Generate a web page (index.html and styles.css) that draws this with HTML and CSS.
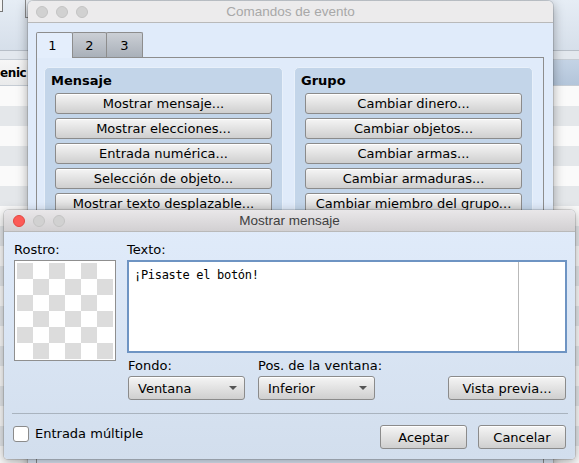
FILE: index.html
```html
<!DOCTYPE html>
<html lang="es">
<head>
<meta charset="utf-8">
<title>Mostrar mensaje</title>
<link rel="stylesheet" href="styles.css">
</head>
<body>
<div class="desk">
  <div class="app">
    <div class="app-toolbar">
      <span class="tb-box"></span>
      <span class="tb-btn"></span>
    </div>
    <div class="app-gap"></div>
    <div class="app-head">
      <div class="hcell"><span>enic</span></div>
      <div class="hcell-sel"></div>
    </div>
    <div class="app-rows"></div>
  </div>

  <div class="win win-cmd">
    <div class="titlebar inactive">
      <div class="lights"><span class="light"></span><span class="light"></span><span class="light"></span></div>
      <div class="wtitle">Comandos de evento</div>
      <div></div>
    </div>
    <div class="cmd-body">
      <div class="tabs">
        <div class="tab sel">1</div>
        <div class="tab">2</div>
        <div class="tab">3</div>
      </div>
      <div class="pane">
        <div class="group">
          <div class="group-title">Mensaje</div>
          <div class="btn gbtn">Mostrar mensaje...</div>
          <div class="btn gbtn">Mostrar elecciones...</div>
          <div class="btn gbtn">Entrada numérica...</div>
          <div class="btn gbtn">Selección de objeto...</div>
          <div class="btn gbtn">Mostrar texto desplazable...</div>
          <div class="btn gbtn">Condición...</div>
        </div>
        <div class="group">
          <div class="group-title">Grupo</div>
          <div class="btn gbtn">Cambiar dinero...</div>
          <div class="btn gbtn">Cambiar objetos...</div>
          <div class="btn gbtn">Cambiar armas...</div>
          <div class="btn gbtn">Cambiar armaduras...</div>
          <div class="btn gbtn">Cambiar miembro del grupo...</div>
          <div class="btn gbtn">Cambiar PV...</div>
        </div>
      </div>
    </div>
  </div>

  <div class="win win-msg">
    <div class="titlebar active">
      <div class="lights"><span class="light red"></span><span class="light"></span><span class="light"></span></div>
      <div class="wtitle">Mostrar mensaje</div>
      <div></div>
    </div>
    <div class="msg-body">
      <div class="main-row">
        <div class="face-col">
          <div class="lbl">Rostro:</div>
          <div class="face"><div class="checker"></div></div>
        </div>
        <div class="text-col">
          <div class="lbl">Texto:</div>
          <div class="textarea">
            <div class="text-content">¡Pisaste el botón!</div>
            <div class="text-margin"></div>
          </div>
          <div class="opts">
            <div class="opt">
              <div class="lbl">Fondo:</div>
              <div class="select"><span>Ventana</span><span class="arrow"></span></div>
            </div>
            <div class="opt">
              <div class="lbl">Pos. de la ventana:</div>
              <div class="select"><span>Inferior</span><span class="arrow"></span></div>
            </div>
            <div class="btn preview">Vista previa...</div>
          </div>
        </div>
      </div>
      <div class="sep"></div>
      <div class="bottom-row">
        <div class="check"></div>
        <div class="check-lbl">Entrada múltiple</div>
        <div class="actions">
          <div class="btn abtn ok">Aceptar</div>
          <div class="btn abtn cancel">Cancelar</div>
        </div>
      </div>
    </div>
  </div>
</div>
</body>
</html>
```

FILE: styles.css
```css
* { box-sizing: border-box; }
html, body { margin: 0; padding: 0; }
body {
  width: 579px;
  height: 463px;
  overflow: hidden;
  font-family: "DejaVu Sans", sans-serif;
  font-size: 13px;
  color: #000;
}
.desk {
  position: relative;
  width: 579px;
  height: 463px;
  overflow: hidden;
  background: #d7dde4;
}

/* background application */
.app {
  display: flex;
  flex-direction: column;
  height: 100%;
}
.app-toolbar {
  height: 51px;
  flex: none;
  display: flex;
  align-items: flex-start;
  background: linear-gradient(#e6edf5, #d6dfea);
  border-bottom: 1px solid #b7bec7;
}
.tb-box {
  width: 3px;
  height: 12px;
  border-right: 1px solid #777;
  border-bottom: 1px solid #777;
  background: #f4f4f4;
}
.tb-btn {
  margin-left: 22px;
  width: 40px;
  height: 18px;
  border-left: 1px solid #888;
  border-bottom: 1px solid #888;
  background: linear-gradient(#eef2f6, #d8dee6);
}
.app-gap {
  height: 9px;
  flex: none;
  background: #e3e8ee;
  border-bottom: 1px solid #c5ccd4;
}
.app-head {
  height: 26px;
  flex: none;
  display: flex;
  border-bottom: 1px solid #c5ccd4;
}
.hcell {
  width: 28px;
  flex: none;
  display: flex;
  align-items: center;
  background: linear-gradient(#f7f7f7, #e9eaeb);
  font-weight: bold;
  font-size: 12px;
  letter-spacing: -0.4px;
  white-space: nowrap;
}
.hcell-sel {
  flex: 1;
  background: linear-gradient(#c4d3e5, #b3c5da);
}
.app-rows {
  flex: 1;
  background: repeating-linear-gradient(to bottom, #fafafa 0 20px, #e4e7ea 20px 40px);
}

/* windows */
.win {
  position: absolute;
  border-radius: 5px 5px 4px 4px;
  overflow: hidden;
  box-shadow: 0 3px 12px rgba(0, 0, 0, 0.35), 0 0 0 1px rgba(0, 0, 0, 0.12);
  display: flex;
  flex-direction: column;
}
.win-cmd {
  left: 28px;
  top: 1px;
  width: 525px;
  height: 480px;
  background: #e0ebfa;
}
.win-msg {
  left: 4px;
  top: 210px;
  width: 571px;
  height: 249px;
  background: linear-gradient(#e1ecfb, #d2deed);
}
.titlebar {
  height: 22px;
  flex: none;
  display: grid;
  grid-template-columns: 1fr auto 1fr;
  align-items: center;
  border-bottom: 1px solid #b9b9b9;
  font-family: "Liberation Sans", Arial, sans-serif;
  font-size: 13.5px;
}
.titlebar.inactive {
  background: #ecebec;
  color: #a8a8a8;
}
.titlebar.active {
  background: linear-gradient(#e9e7e9, #d2d0d2);
  color: #404040;
}
.lights {
  display: flex;
  gap: 8px;
  padding-left: 8px;
}
.win-msg .lights { padding-left: 9px; }
.light {
  width: 12px;
  height: 12px;
  border-radius: 50%;
  background: #d1d1d1;
  border: 1px solid #c3c3c3;
}
.light.red {
  background: #fc5b57;
  border-color: #e2463f;
}
.wtitle { white-space: nowrap; }

/* comandos body */
.cmd-body {
  flex: 1;
  padding: 9px 9px 0 8px;
  display: flex;
  flex-direction: column;
}
.tabs {
  display: flex;
  height: 25px;
  flex: none;
}
.tab {
  width: 35px;
  height: 25px;
  border: 1px solid #8d8d8d;
  border-bottom: none;
  margin-right: -1px;
  display: flex;
  align-items: center;
  justify-content: center;
  background: linear-gradient(#cbcfd5, #a9b0b9);
  border-radius: 2px 2px 0 0;
}
.tab.sel {
  width: 37px;
  height: 26px;
  background: #e4eefc;
  position: relative;
  z-index: 1;
  padding-right: 4px;
}
.tab:nth-child(3) { width: 37px; }
.pane {
  flex: 1;
  border: 1px solid #8d8d8d;
  border-bottom: none;
  padding: 9px 9px 0 7px;
  display: flex;
  gap: 11px;
  align-items: flex-start;
}
.group {
  width: 239px;
  flex: none;
  background: #c3d5e9;
  border: 1px solid #e8f0fa;
  border-radius: 5px;
  padding: 5px 10px 10px 10px;
  display: flex;
  flex-direction: column;
  gap: 4px;
}
.group-title {
  font-weight: bold;
  line-height: 16px;
  height: 16px;
  margin-left: -4px;
}

/* buttons */
.btn {
  display: flex;
  align-items: center;
  justify-content: center;
  border: 1px solid #8b8b8b;
  border-radius: 3px;
  background: linear-gradient(#f5f5f5, #e4e4e4 45%, #cfcfcf);
  color: #000;
  white-space: nowrap;
  box-shadow: inset 0 1px 0 #fff;
}
.gbtn {
  height: 21px;
}

/* message dialog body */
.msg-body {
  flex: 1;
  padding: 10px 8px 0 10px;
  display: flex;
  flex-direction: column;
}
.main-row {
  display: flex;
  gap: 11px;
}
.face-col {
  width: 102px;
  flex: none;
}
.lbl {
  line-height: 16px;
  height: 16px;
  margin-bottom: 2px;
  white-space: nowrap;
}
.face {
  width: 102px;
  height: 101px;
  background: #fff;
  border: 1px solid #8f8f8f;
  padding: 2px 2px 1px 2px;
}
.checker {
  width: 96px;
  height: 96px;
  background: repeating-conic-gradient(#fff 0 25%, #dcdcdc 0 50%) 0 0 / 32px 32px;
}
.text-col {
  flex: 1;
  display: flex;
  flex-direction: column;
}
.textarea {
  height: 93px;
  background: #fff;
  border: 2px solid #6e94c3;
  display: flex;
}
.text-content {
  flex: 1;
  padding: 6px 5px;
  font-family: "DejaVu Sans Mono", monospace;
  font-size: 12px;
  line-height: 15px;
  letter-spacing: -0.3px;
}
.text-margin {
  width: 47px;
  flex: none;
  border-left: 1px solid #b9b9b9;
}
.opts {
  margin-top: 5px;
  display: flex;
  align-items: flex-end;
  gap: 12px;
  padding-left: 1px;
}
.opt { width: 117px; }
.opt:nth-child(2) { margin-left: 1px; }
.select {
  height: 24px;
  border: 1px solid #8b8b8b;
  border-radius: 3px;
  background: linear-gradient(#f5f5f5, #e4e4e4 45%, #cfcfcf);
  box-shadow: inset 0 1px 0 #fff;
  display: flex;
  align-items: center;
  justify-content: space-between;
  padding: 0 7px 0 9px;
}
.arrow {
  width: 0;
  height: 0;
  border-left: 4px solid transparent;
  border-right: 4px solid transparent;
  border-top: 4px solid #555;
}
.preview {
  margin-left: auto;
  width: 118px;
  height: 24px;
  margin-right: 1px;
}
.sep {
  height: 1px;
  margin: 13px -1px 0 -2px;
  background: #a9b3be;
}
.bottom-row {
  margin-top: 11px;
  display: flex;
  align-items: flex-start;
}
.check {
  width: 16px;
  height: 16px;
  margin-top: 1px;
  margin-left: -1px;
  background: #fff;
  border: 1px solid #8b8b8b;
  border-radius: 3px;
}
.check-lbl {
  margin-left: 6px;
  line-height: 18px;
}
.actions {
  margin-left: auto;
  margin-right: 1px;
  display: flex;
  gap: 11px;
}
.abtn { height: 24px; }
.ok { width: 87px; }
.cancel { width: 88px; }
```
